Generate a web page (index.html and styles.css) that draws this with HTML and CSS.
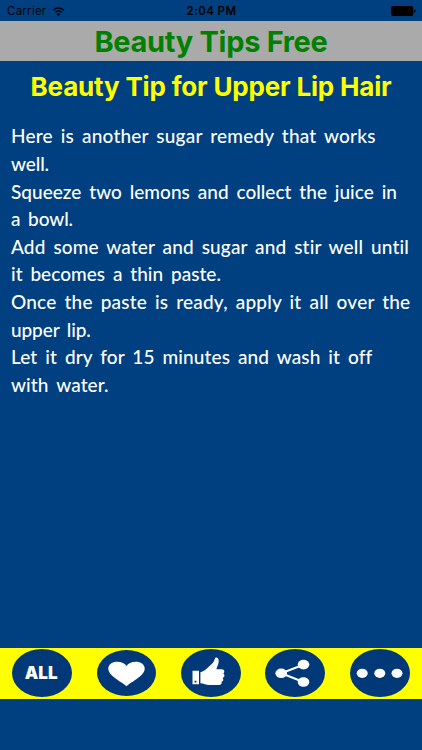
FILE: index.html
```html
<!DOCTYPE html>
<html lang="en">
<head>
    <meta charset="UTF-8">
    <meta name="viewport" content="width=device-width, initial-scale=1.0">
    <title>Beauty Tips Free</title>
    <link rel="stylesheet" href="styles.css">
</head>
<body>

<div class="app">
    <div class="status">
        <div class="carrier">
            <span>Carrier</span>
            <svg class="wifi" viewBox="0 0 13 9">
                <path d="M1 3.3Q6.5-1.3 12 3.3M3.1 5.3Q6.5 2.6 9.9 5.3" fill="none" stroke="#000" stroke-width="1.4"/>
                <path d="M4.6 6.9Q6.5 5.5 8.4 6.9L6.5 8.9Z"/>
            </svg>
        </div>
        <div class="time">2:04 PM</div>
        <svg class="battery" viewBox="0 0 25 10">
            <rect x="0" y="0" width="22.3" height="10" rx="1.8"/>
            <path d="M23 3.2Q24.6 3.7 24.6 5T23 6.8Z"/>
        </svg>
    </div>

    <h1>Beauty Tips Free</h1>
    <h2>Beauty Tip for Upper Lip Hair</h2>

    <div class="tip">
        <p><span class="l1">Here is another sugar remedy that works</span><br><span class="l2">well.</span></p>
        <p><span class="l3">Squeeze two lemons and collect the juice in</span><br><span class="l4">a bowl.</span></p>
        <p><span class="l5">Add some water and sugar and stir well until</span><br><span class="l6">it becomes a thin paste.</span></p>
        <p><span class="l7">Once the paste is ready, apply it all over the</span><br><span class="l8">upper lip.</span></p>
        <p><span class="l9">Let it dry for 15 minutes and wash it off</span><br><span class="l10">with water.</span></p>
    </div>

    <div class="toolbar">
        <div class="item"><div class="button all">ALL</div></div>
        <div class="item">
            <div class="button small">
                <svg viewBox="0 0 60 48">
                    <path d="M30 37.7C26 33.7 11 27 11 19.5C11 15 15.5 12.3 20 12.3C25 12.3 28.5 14 30 16.8C31.5 14 35 12.3 40 12.3C44.5 12.3 49 15 49 19.5C49 27 34 33.7 30 37.7Z"/>
                </svg>
            </div>
        </div>
        <div class="item">
            <div class="button">
                <svg viewBox="0 0 60 48">
                    <path fill-rule="evenodd" d="M11.5 21.8H18V35.3H11.5ZM13.6 31.8V33.5H15.4V31.8Z"/>
                    <path d="M19.4 23.3C21.5 22.7 23.3 21.8 25 20.3L31.5 14.3C33.5 12.3 33.2 10.6 34.2 9C35.6 7.7 38 9.3 37.7 12.5C37.5 15.5 35.8 18 35.4 20.2H40.8C43.5 20.2 44.2 23.2 42.2 24.4C44.2 25.8 43.8 28 41.7 28.9C43 30.4 42.2 32.2 40.5 32.7C41.3 34.5 40 36 37.8 36H28.3C25 36 22.5 34.4 19.4 34.2Z"/>
                </svg>
            </div>
        </div>
        <div class="item">
            <div class="button">
                <svg viewBox="0 0 60 48">
                    <path class="line" d="M38.5 15.7L16.2 24.3L38.5 33"/>
                    <ellipse cx="16.2" cy="24.3" rx="5.8" ry="4.8"/>
                    <ellipse cx="38.5" cy="15.6" rx="5.8" ry="4.8"/>
                    <ellipse cx="38.5" cy="33" rx="5.8" ry="4.8"/>
                </svg>
            </div>
        </div>
        <div class="item">
            <div class="button">
                <svg viewBox="0 0 60 48">
                    <ellipse cx="12.2" cy="24.3" rx="5.5" ry="4.6"/>
                    <ellipse cx="29.8" cy="24.3" rx="5.5" ry="4.6"/>
                    <ellipse cx="47" cy="24.3" rx="5.5" ry="4.6"/>
                </svg>
            </div>
        </div>
    </div>
</div>

</body>
</html>
```
FILE: styles.css
```css
body {
    margin: 0;
    background-color: #004080;
    font-family: Inter, "Liberation Sans", sans-serif;
}
.app {
    display: flex;
    flex-direction: column;
    width: 422px;
    height: 750px;
    overflow: hidden;
}
.status {
    display: grid;
    grid-template-columns: 1fr auto 1fr;
    align-items: center;
    height: 21px;
    padding: 1px 6px 0 7px;
    box-sizing: border-box;
    font-size: 11.5px;
    color: #000;
}
.carrier {
    display: flex;
    align-items: center;
    gap: 6px;
    letter-spacing: 0.25px;
}
.wifi {
    width: 13px;
    height: 9px;
}
.time {
    font-weight: 600;
    letter-spacing: 0.4px;
}
.battery {
    width: 25px;
    height: 10px;
    justify-self: end;
}
h1, h2 {
    margin: 0;
    text-align: center;
    white-space: nowrap;
    font-weight: 650;
}
h1 {
    height: 40.4px;
    line-height: 41px;
    background-color: #aaa;
    color: #008000;
    font-size: 29px;
    letter-spacing: -0.3px;
}
h2 {
    height: 50px;
    line-height: 52px;
    color: #ff0;
    font-size: 26px;
    letter-spacing: -0.18px;
}
.tip {
    flex: 1;
    padding: 11px 0 0 11px;
    color: #fff;
    font-family: "Chalkboard SE", Lato, sans-serif;
    font-size: 19px;
    font-weight: 500;
    line-height: 27.6px;
    letter-spacing: 0.2px;
    word-spacing: 3px;
    white-space: nowrap;
}
.tip p {
    margin: 0;
}
.l2, .l4, .l8 {
    letter-spacing: -0.1px;
}
.l3, .l6 {
    letter-spacing: 0.03px;
}
.l5 {
    letter-spacing: 0.13px;
}
.l9, .l10 {
    letter-spacing: 0.12px;
}
.toolbar {
    display: flex;
    align-items: center;
    height: 51px;
    margin-bottom: 51.5px;
    background-color: #ff0;
}
.item {
    flex: 1;
    display: flex;
    justify-content: center;
}
.button {
    width: 60px;
    height: 48px;
    border-radius: 50%;
    background-color: #003878;
    color: #fff;
}
.button.small {
    width: 59px;
    height: 46px;
}
.button svg {
    display: block;
    width: 100%;
    height: 100%;
    fill: #fff;
}
.button .line {
    fill: none;
    stroke: #fff;
    stroke-width: 2;
}
.all {
    font-size: 17px;
    font-weight: 900;
    line-height: 49px;
    text-indent: -2px;
    text-align: center;
}
```
